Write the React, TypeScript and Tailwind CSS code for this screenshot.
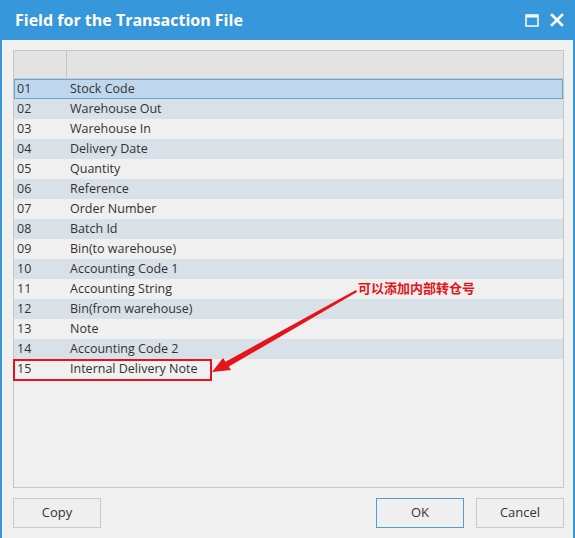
import React from 'react';

const FIELDS: [string, string][] = [
    ['01', 'Stock Code'],
    ['02', 'Warehouse Out'],
    ['03', 'Warehouse In'],
    ['04', 'Delivery Date'],
    ['05', 'Quantity'],
    ['06', 'Reference'],
    ['07', 'Order Number'],
    ['08', 'Batch Id'],
    ['09', 'Bin(to warehouse)'],
    ['10', 'Accounting Code 1'],
    ['11', 'Accounting String'],
    ['12', 'Bin(from warehouse)'],
    ['13', 'Note'],
    ['14', 'Accounting Code 2'],
    ['15', 'Internal Delivery Note'],
];

const FieldRow: React.FC<{ no: string; name: string; index: number }> = ({ no, name, index }) => {
    const selected = index === 0;
    const shaded = index % 2 === 1;
    return (
        <div
            className={
                selected
                    ? 'flex h-[20px] items-center border border-[#68a7dc] bg-[#bed7ec]'
                    : shaded
                      ? 'flex h-[20px] items-center border border-transparent bg-[#d9e1e8]'
                      : 'flex h-[20px] items-center border border-transparent bg-[#f0f0f0]'
            }
        >
            <span className="w-[55px] pl-[2px]">{no}</span>
            <span>{name}</span>
        </div>
    );
};

const Button: React.FC<{ label: string; focused?: boolean }> = ({ label, focused }) => (
    <button
        className={
            focused
                ? 'h-[30px] w-[88px] border border-[#4d9fe0] bg-[#efefef] text-[13px] text-[#333]'
                : 'h-[30px] w-[88px] border border-[#c9c9c9] bg-[#efefef] text-[13px] text-[#333]'
        }
    >
        {label}
    </button>
);

export default function App() {
    return (
        <div
            className="relative flex h-[538px] w-[575px] flex-col bg-[#3797db]"
            style={{ fontFamily: '"Open Sans", "Noto Sans CJK SC", sans-serif' }}
        >
            {/* title bar */}
            <div className="flex h-[40px] shrink-0 items-center justify-between pl-[15px] pr-[11px]">
                <span className="text-[16px] font-bold text-white">Field for the Transaction File</span>
                <div className="flex items-center gap-[11px]">
                    <svg width="14" height="13" viewBox="0 0 14 13">
                        <rect x="1" y="1" width="12" height="11" fill="none" stroke="white" strokeWidth="1.5" />
                        <line x1="1" y1="2.5" x2="13" y2="2.5" stroke="white" strokeWidth="2" />
                    </svg>
                    <svg width="14" height="14" viewBox="0 0 14 14">
                        <path d="M2 2 L12 12 M12 2 L2 12" stroke="white" strokeWidth="2.6" strokeLinecap="square" />
                    </svg>
                </div>
            </div>

            {/* body */}
            <div className="mx-[2px] flex flex-1 flex-col bg-[#f0f0f0] pl-[11px] pr-[9px] pt-[10px]">
                <div className="flex h-[438px] flex-col border border-[#c4c7ca] bg-[#f0f0f0] text-[12.5px] text-[#333]">
                    <div className="flex h-[28px] shrink-0 border-b border-[#c4c7ca] bg-[#e3e3e3]">
                        <div className="w-[53px] border-r border-[#c4c7ca]" />
                    </div>
                    {FIELDS.map(([no, name], i) => (
                        <FieldRow key={no} no={no} name={name} index={i} />
                    ))}
                </div>

                <div className="flex items-center pt-[10px]">
                    <Button label="Copy" />
                    <div className="flex-1" />
                    <Button label="OK" focused />
                    <div className="w-[12px]" />
                    <Button label="Cancel" />
                </div>
            </div>

            {/* annotation */}
            <div className="absolute left-[13px] top-[359px] h-[22px] w-[199px] border-2 border-[#e5131a]" />
            <span className="absolute left-[358px] top-[279px] text-[13px] font-bold text-[#e5131a]">
                可以添加内部转仓号
            </span>
            <svg className="absolute left-0 top-0" width="575" height="538" viewBox="0 0 575 538">
                <polygon points="356,290 357,292 228,367 225,362" fill="#e5131a" />
                <polygon points="212,372 223,358 231,370" fill="#e5131a" />
            </svg>
        </div>
    );
}
